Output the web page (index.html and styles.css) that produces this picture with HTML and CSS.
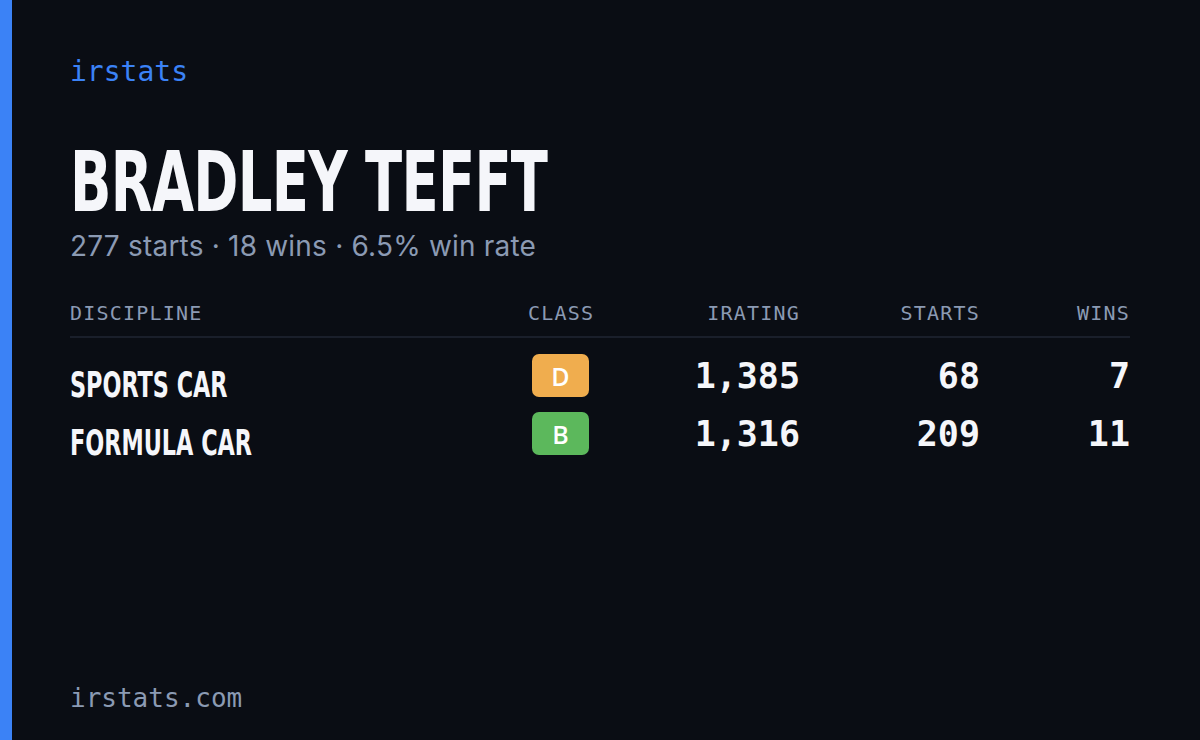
FILE: index.html
```html
<!DOCTYPE html>
<html>
<head>
<meta charset="utf-8">
<link rel="stylesheet" href="styles.css">
</head>
<body>
<div class="card">
  <div class="accent"></div>
  <main class="content">
    <div class="brand">irstats</div>
    <h1 class="name">BRADLEY TEFFT</h1>
    <p class="summary">277 starts · 18 wins · 6.5% win rate</p>
    <div class="table">
      <div class="head">
        <span class="h-disc">DISCIPLINE</span>
        <span class="h-class">CLASS</span>
        <span class="h-num">IRATING</span>
        <span class="h-num">STARTS</span>
        <span class="h-num">WINS</span>
      </div>
      <div class="row">
        <span class="disc">SPORTS CAR</span>
        <span class="cls"><span class="badge badge-d">D</span></span>
        <span class="num">1,385</span>
        <span class="num">68</span>
        <span class="num">7</span>
      </div>
      <div class="row">
        <span class="disc">FORMULA CAR</span>
        <span class="cls"><span class="badge badge-b">B</span></span>
        <span class="num">1,316</span>
        <span class="num">209</span>
        <span class="num">11</span>
      </div>
    </div>
    <div class="footer">irstats.com</div>
  </main>
</div>
</body>
</html>
```

FILE: styles.css
```css
html, body {
  margin: 0;
  padding: 0;
  background: #0a0d14;
}
.card {
  width: 1200px;
  height: 740px;
  display: flex;
  background: #0a0d14;
  overflow: hidden;
}
.accent {
  width: 12px;
  flex: none;
  background: #3b82f6;
}
.content {
  flex: 1;
  display: flex;
  flex-direction: column;
  padding: 54px 70px 25px 58px;
}
.brand {
  font-family: "DejaVu Sans Mono", monospace;
  font-size: 28px;
  line-height: 36px;
  color: #3b82f6;
}
.name {
  margin: 50px 0 0 0;
  font-family: "DejaVu Sans Condensed", sans-serif;
  font-weight: 700;
  font-size: 84px;
  line-height: 84px;
  color: #f5f6fa;
  letter-spacing: -1px;
  white-space: nowrap;
  transform: scaleX(0.72);
  transform-origin: left center;
}
.summary {
  margin: 4px 0 0 0;
  font-family: Inter, "Open Sans", sans-serif;
  font-size: 28px;
  line-height: 36px;
  letter-spacing: 0.2px;
  color: #8b9ab3;
}
.table {
  margin-top: 36px;
  display: flex;
  flex-direction: column;
}
.head, .row {
  display: grid;
  grid-template-columns: 1fr 65px 207px 180px 150px;
  align-items: center;
}
.head {
  padding-bottom: 10px;
  border-bottom: 2px solid #1a1f2b;
  font-family: "DejaVu Sans Mono", monospace;
  font-size: 20px;
  line-height: 26px;
  letter-spacing: 1.2px;
  color: #8b9ab3;
}
.h-class { text-align: center; }
.h-num { text-align: right; }
.row {
  height: 58px;
}
.head + .row { margin-top: 8px; }
.disc {
  font-family: "DejaVu Sans Condensed", sans-serif;
  font-weight: 700;
  font-size: 36px;
  color: #f5f6fa;
  padding-top: 18px;
  white-space: nowrap;
  transform: scaleX(0.69);
  transform-origin: left center;
}
.cls {
  display: flex;
  justify-content: center;
}
.badge {
  width: 57px;
  height: 43px;
  border-radius: 7px;
  display: flex;
  align-items: center;
  justify-content: center;
  font-family: "Open Sans", sans-serif;
  font-weight: 600;
  font-size: 25px;
  color: #ffffff;
}
.badge-d { background: #f0ad4e; }
.badge-b { background: #5cb85c; }
.num {
  text-align: right;
  font-family: "DejaVu Sans Mono", monospace;
  font-weight: 700;
  font-size: 35px;
  color: #f5f6fa;
}
.footer {
  margin-top: auto;
  font-family: "DejaVu Sans Mono", monospace;
  font-size: 26px;
  line-height: 34px;
  color: #8b9ab3;
}
```
